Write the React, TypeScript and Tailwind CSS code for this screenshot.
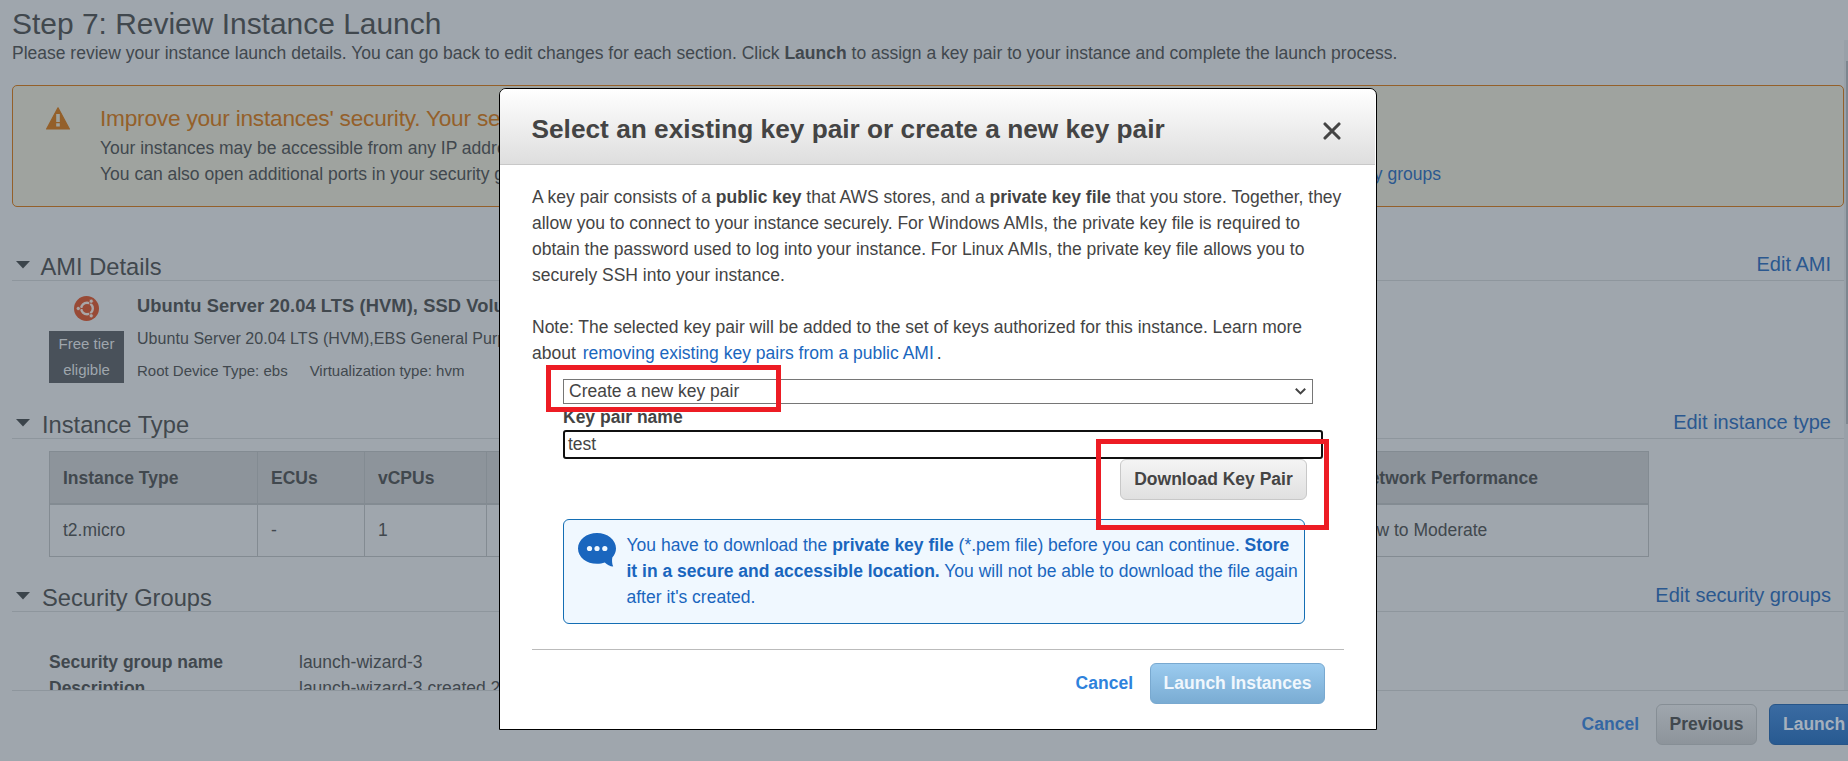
import type { ReactNode } from "react";

function Caret() {
  return (
    <svg className="h-[8px] w-[14px]" viewBox="0 0 14 8">
      <path d="M0 0H14L7 7.6Z" fill="#3b444b" />
    </svg>
  );
}

function SectionHeading({ title, link, gap }: { title: string; link: string; gap: string }) {
  return (
    <div className="flex h-[34px] items-end justify-between border-b border-[#8e969d] pr-[13px] pl-[4px]">
      <div className="flex items-end">
        <div className="flex h-[27px] items-start pt-[8px]">
          <Caret />
        </div>
        <h2 className={`${gap} -mb-px text-[23.7px] leading-[28px]`}>{title}</h2>
      </div>
      <a className="mb-[4px] text-[20px] leading-[24px] text-[#2b588f]">{link}</a>
    </div>
  );
}

function UbuntuLogo() {
  return (
    <svg className="h-[25px] w-[25px]" viewBox="0 0 25 25">
      <circle cx="12.5" cy="12.5" r="12.5" fill="#984a36" />
      <circle cx="13" cy="12.5" r="5.8" fill="none" stroke="#a9a6a7" strokeWidth="2.4" />
      <g stroke="#984a36" strokeWidth="1">
        <path d="M13 12.5H5M13 12.5L17.2 5M13 12.5L17.2 20" />
      </g>
      <g fill="#a9a6a7" stroke="#984a36" strokeWidth=".8">
        <circle cx="4.3" cy="12.5" r="2.1" />
        <circle cx="17.2" cy="5.2" r="2.1" />
        <circle cx="17.2" cy="19.8" r="2.1" />
      </g>
    </svg>
  );
}

function WarningIcon() {
  return (
    <svg className="h-[23px] w-[24px]" viewBox="0 0 24 23">
      <path d="M12 .8L23.4 22H.6Z" fill="#94602a" stroke="#94602a" strokeWidth="1.2" strokeLinejoin="round" />
      <path d="M10.2 7H13.8V15H10.2ZM10.2 16.2H13.8V19.4H10.2Z" fill="#9fa39f" />
    </svg>
  );
}

function SpeechIcon() {
  return (
    <svg className="h-[34px] w-[38px]" viewBox="0 0 38 34">
      <path
        d="M19 0C8.500 0 0 6.800 0 15.500C0 24.200 8.500 30.800 19 30.800C21.800 30.800 24.500 30.400 26.800 29.500C29 31.700 32 33.300 35.200 33.600C34 31 33.800 27.500 34.300 24.600C36.600 22 38 18.900 38 15.500C38 6.800 29.500 0 19 0Z"
        fill="#1a66be"
      />
      <g fill="#f0f8ff">
        <circle cx="11.500" cy="15.500" r="2.600" />
        <circle cx="19" cy="15.500" r="2.600" />
        <circle cx="26.800" cy="15.500" r="2.600" />
      </g>
    </svg>
  );
}

function Cell({ w, children, last = false }: { w: string; children?: ReactNode; last?: boolean }) {
  return (
    <div className={`${w} shrink-0 pl-[13px] whitespace-nowrap ${last ? "" : "border-r border-[#838b92]"}`}>{children}</div>
  );
}

function ReviewPage() {
  return (
    <div className="flex h-[761px] flex-col">
      <h1 className="h-[40px] pt-[6px] pl-[12px] text-[29.95px] leading-[35px]">Step 7: Review Instance Launch</h1>

      <div className="flex h-[650px]">
        <div className="h-[650px] w-[1844px] overflow-hidden pl-[12px]">
          <p className="h-[45px] leading-[26px]">
            Please review your instance launch details. You can go back to edit changes for each section. Click{" "}
            <b>Launch</b> to assign a key pair to your instance and complete the launch process.
          </p>

          <div className="flex h-[122px] rounded-[5px] border border-[#94602a] bg-[#9fa39f] whitespace-nowrap">
            <div className="w-[87px] shrink-0 pt-[21px] pl-[33px]">
              <WarningIcon />
            </div>
            <div className="pt-[19px]">
              <div className="-mt-px h-[31px] text-[22.67px] leading-[28px] tracking-[-0.22px] text-[#94602a]">
                Improve your instances' security. Your security
              </div>
              <div className="h-[26px] leading-[26px]">Your instances may be accessible from any IP address.</div>
              <div className="flex leading-[26px]">
                <span className="w-[1109px]">You can also open additional ports in your security group.</span>
                <a className="w-[232px] text-right text-[#2b588f]">Edit security groups</a>
              </div>
            </div>
          </div>

          <div className="h-[40px]" />
          <SectionHeading title="AMI Details" link="Edit AMI" gap="ml-[10.500px]" />
          <div className="flex h-[124px] pl-[37px]">
            <div className="flex w-[75px] flex-col items-center pt-[15px]">
              <UbuntuLogo />
              <div className="mt-[10px] h-[52px] w-[75px] bg-[#49515a] text-center text-[15px] leading-[26px] text-[#9fa6ad]">
                Free tier
                <br />
                eligible
              </div>
            </div>
            <div className="pl-[13px] whitespace-nowrap">
              <div className="mt-[12px] text-[18.3px] leading-[26px] font-bold tracking-[0.1px]">
                Ubuntu Server 20.04 LTS (HVM), SSD Volume Type
              </div>
              <div className="mt-[7.500px] text-[16px] leading-[24px] tracking-[0.05px]">
                Ubuntu Server 20.04 LTS (HVM),EBS General Purpose
              </div>
              <div className="mt-[8.500px] flex gap-[22px] text-[15px] leading-[24px]">
                <span>Root Device Type: ebs</span>
                <span>Virtualization type: hvm</span>
              </div>
            </div>
          </div>

          <SectionHeading title="Instance Type" link="Edit instance type" gap="ml-[12px]" />
          <div className="mt-[12px] ml-[37px] w-[1600px] border border-[#838b92]">
            <div className="flex h-[53px] border-b-2 border-[#838b92] bg-[#8d949b] leading-[52px] font-bold">
              <Cell w="w-[208px]">Instance Type</Cell>
              <Cell w="w-[107px]">ECUs</Cell>
              <Cell w="w-[122px]">vCPUs</Cell>
              <Cell w="w-[857px]" />
              <Cell w="w-[304px]" last>
                Network Performance
              </Cell>
            </div>
            <div className="flex h-[51px] leading-[50px]">
              <Cell w="w-[208px]">t2.micro</Cell>
              <Cell w="w-[107px]">-</Cell>
              <Cell w="w-[122px]">1</Cell>
              <Cell w="w-[857px]" />
              <Cell w="w-[304px]" last>
                Low to Moderate
              </Cell>
            </div>
          </div>

          <div className="h-[21px]" />
          <SectionHeading title="Security Groups" link="Edit security groups" gap="ml-[12px]" />
          <div className="mt-[37px] ml-[37px] grid grid-cols-[250px_1fr] leading-[26px]">
            <b>Security group name</b>
            <span>launch-wizard-3</span>
            <b>Description</b>
            <span>launch-wizard-3 created 2020</span>
          </div>
        </div>
        <div className="w-[4px] bg-[#98a0a8] pt-[21px] pl-[2px]">
          <div className="h-[363px] bg-[#7d868f]" />
        </div>
      </div>

      <div className="ml-[12px] flex flex-1 items-start justify-end overflow-hidden border-t border-[#8e969d] pt-[13px]">
        <a className="mr-[17px] leading-[41px] font-bold text-[#3467a3]">Cancel</a>
        <div className="h-[41px] w-[101px] rounded-[6px] border border-[#868e95] bg-linear-to-b from-[#9fa6ad] to-[#8d949b] text-center leading-[38px] font-bold">
          Previous
        </div>
        <div className="mr-[-26px] ml-[12px] h-[41px] w-[105px] shrink-0 rounded-[6px] border border-[#275588] bg-linear-to-b from-[#3a6ba2] to-[#285a91] pl-[13px] leading-[38px] font-bold text-[#a5b0bd]">
          Launch
        </div>
      </div>
    </div>
  );
}

function KeyPairModal() {
  return (
    <div className="absolute top-[88px] left-[499px] h-[642px] w-[878px] rounded-t-[7px] border border-black bg-white text-[#444]">
      <div className="mr-px flex h-[76px] items-start justify-between rounded-t-[6px] border-b border-[#c8c8c8] bg-linear-to-b from-white to-[#dedede] pl-[31.500px]">
        <h2 className="mt-[24px] text-[26.25px] leading-[32px] font-bold whitespace-nowrap">
          Select an existing key pair or create a new key pair
        </h2>
        <svg className="mt-[33px] mr-[34px] h-[18px] w-[18px]" viewBox="0 0 18 18">
          <path d="M2 2L16 16M16 2L2 16" stroke="#444" strokeWidth="3.1" strokeLinecap="round" />
        </svg>
      </div>

      <div className="pt-[19px] pl-[32px] leading-[26px] whitespace-nowrap">
        <p>
          A key pair consists of a <b>public key</b> that AWS stores, and a <b>private key file</b> that you store.
          Together, they
          <br />
          allow you to connect to your instance securely. For Windows AMIs, the private key file is required to
          <br />
          obtain the password used to log into your instance. For Linux AMIs, the private key file allows you to
          <br />
          securely SSH into your instance.
        </p>
        <p className="mt-[26px]">
          Note: The selected key pair will be added to the set of keys authorized for this instance. Learn more
          <br />
          about <a className="ml-[2px] text-[#1a66be]">removing existing key pairs from a public AMI</a>
          <span className="ml-[3px]">.</span>
        </p>
      </div>

      <div className="mt-[13px] ml-[63px]">
        <div className="flex h-[25px] w-[750px] items-center justify-between border border-[#767676] pr-[6px] pl-[5px] leading-[23px]">
          <span>Create a new key pair</span>
          <svg className="h-[7px] w-[11px]" viewBox="0 0 11 7">
            <path d="M.8 .8L5.500 5.400L10.200 .8" fill="none" stroke="#444" strokeWidth="2" />
          </svg>
        </div>
        <div className="h-[26px] leading-[26px] font-bold">Key pair name</div>
        <div className="h-[29px] w-[760px] rounded-[3px] border-2 border-[#101010] pl-[3px] leading-[24px]">test</div>
        <div className="flex w-[744px] justify-end">
          <div className="h-[41px] w-[187px] rounded-[6px] border border-[#c8c8c8] bg-linear-to-b from-[#f4f4f4] to-[#e0e0e0] text-center leading-[38px] font-bold">
            Download Key Pair
          </div>
        </div>
        <div className="mt-[19px] flex h-[105px] w-[742px] rounded-[6px] border border-[#146eb4] bg-[#f0f8ff] pt-[13px] pl-[14px] leading-[26px] whitespace-nowrap text-[#1a66be]">
          <div className="w-[48.500px] shrink-0">
            <SpeechIcon />
          </div>
          <p className="-mt-px">
            You have to download the <b>private key file</b> (*.pem file) before you can continue. <b>Store</b>
            <br />
            <b>it in a secure and accessible location.</b> You will not be able to download the file again
            <br />
            after it's created.
          </p>
        </div>
      </div>

      <div className="mt-[25px] ml-[32px] flex w-[812px] justify-end border-t border-[#bbb] pt-[13px] pr-[19px]">
        <a className="mr-[17px] leading-[41px] font-bold text-[#2e82dc]">Cancel</a>
        <div className="h-[41px] w-[175px] rounded-[6px] border border-[#79a9d0] bg-linear-to-b from-[#9bcbef] to-[#7aacd3] text-center leading-[38px] font-bold text-[#f0f7fd]">
          Launch Instances
        </div>
      </div>
    </div>
  );
}

export default function App() {
  return (
    <div className="relative h-[761px] w-full overflow-hidden bg-[#9fa6ad] font-['Liberation_Sans',Arial,sans-serif] text-[17.5px] text-[#41484e]">
      <ReviewPage />
      <KeyPairModal />
      <div className="absolute top-[365px] left-[546px] h-[47px] w-[235px] border-5 border-[#ed1c24]" />
      <div className="absolute top-[439px] left-[1096px] h-[91px] w-[233px] border-5 border-[#ed1c24]" />
    </div>
  );
}
